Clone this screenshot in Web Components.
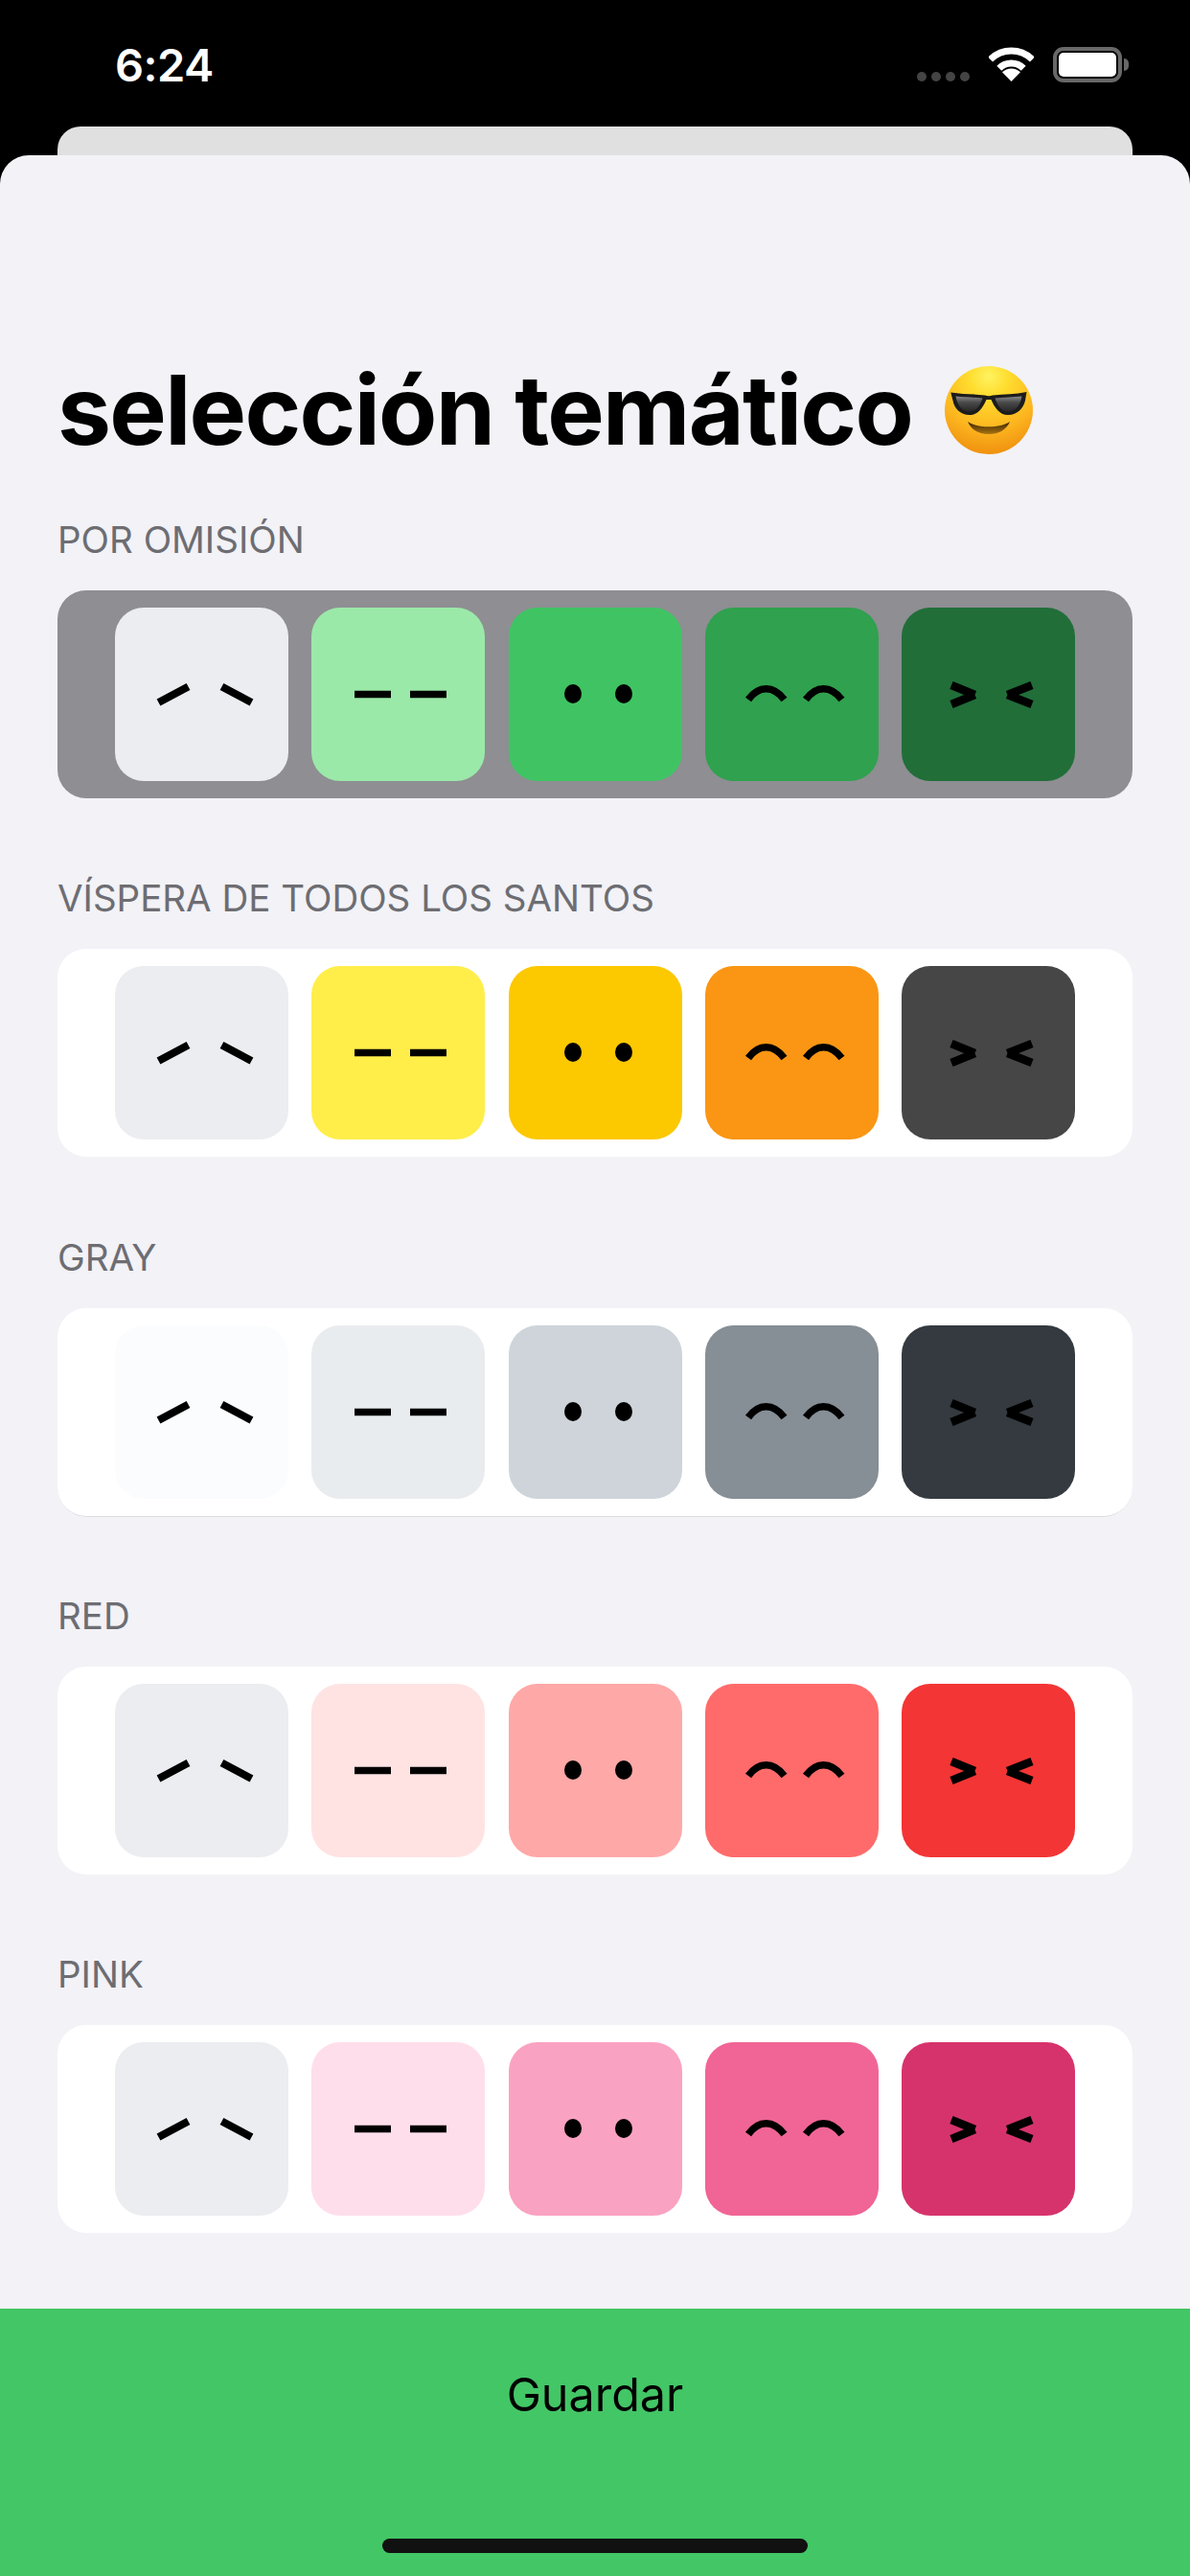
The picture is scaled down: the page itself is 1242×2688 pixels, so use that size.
<!DOCTYPE html>
<html lang="es">
<head>
<meta charset="utf-8">
<title>selección temático</title>
<style>
    html, body { margin: 0; padding: 0; background: #000; }
    body { width: 1242px; height: 2688px; overflow: hidden; font-family: Inter, "Liberation Sans", sans-serif; }
</style>
</head>
<body>
<theme-app>
    <status-bar slot="status" time="6:24"></status-bar>
    <sheet-title slot="title">selección temático</sheet-title>
    <theme-row label="POR OMISIÓN" colors="#ebedf0,#9be9a8,#40c463,#30a14e,#216e39" selected></theme-row>
    <theme-row label="VÍSPERA DE TODOS LOS SANTOS" colors="#ebedf0,#ffee4a,#fcc800,#fa9614,#464646"></theme-row>
    <theme-row label="GRAY" colors="#fbfcfe,#e9ecef,#ced4da,#868e96,#343a40" underline></theme-row>
    <theme-row label="RED" colors="#ebedf0,#ffe3e3,#ffa8a8,#ff6b6b,#f33535"></theme-row>
    <theme-row label="PINK" colors="#ebedf0,#ffdeeb,#faa2c1,#f06595,#d6336c"></theme-row>
    <save-button slot="footer">Guardar</save-button>
</theme-app>

<script>
class StatusBar extends HTMLElement {

    constructor() {
        super()
        this.attachShadow({ mode: 'open' })
        this.#render()
    }

    #render() {
        this.shadowRoot.innerHTML = `
            <style>
                :host {
                    display: flex;
                    height: 132px;
                    box-sizing: border-box;
                    padding: 49px 64px 0 120px;
                    justify-content: space-between;
                    align-items: flex-start;
                    color: #fff;
                }

                .time {
                    font: 600 47px/37px Inter, "Liberation Sans", sans-serif;
                    letter-spacing: -0.5px;
                }

                .icons {
                    display: flex;
                    align-items: flex-start;
                    gap: 20px;
                }

                .signal {
                    display: flex;
                    gap: 5px;
                    margin-top: 26px;
                }

                .signal i {
                    width: 10px;
                    height: 10px;
                    border-radius: 50%;
                    background: #444;
                }

                .battery {
                    display: flex;
                    align-items: center;
                }

                .battery .case {
                    width: 72px;
                    height: 37px;
                    box-sizing: border-box;
                    border: 4px solid #686868;
                    border-radius: 11px;
                    padding: 2px;
                }

                .battery .level {
                    height: 100%;
                    background: #fff;
                    border-radius: 5px;
                }

                .battery .nub {
                    width: 5px;
                    height: 13px;
                    margin-left: 2px;
                    background: #686868;
                    border-radius: 0 6px 6px 0;
                }
            </style>
            <span class="time">${this.getAttribute('time')}</span>
            <div class="icons">
                <div class="signal"><i></i><i></i><i></i><i></i></div>
                <svg width="47" height="37" viewBox="0 0 47 37">
                    <g fill="none" stroke="#fff" stroke-width="7">
                        <path d="M1.6 13.1 A31 31 0 0 1 45.4 13.1"/>
                        <path d="M10.8 22.3 A18 18 0 0 1 36.2 22.3"/>
                    </g>
                    <path d="M23.5 36 L14 26.3 A13.5 13.5 0 0 1 33 26.3 Z" fill="#fff"/>
                </svg>
                <div class="battery">
                    <div class="case"><div class="level"></div></div>
                    <div class="nub"></div>
                </div>
            </div>
        `
    }

}

class SheetTitle extends HTMLElement {

    constructor() {
        super()
        this.attachShadow({ mode: 'open' })
        this.shadowRoot.innerHTML = `
            <style>
                :host {
                    display: flex;
                    align-items: center;
                    gap: 34px;
                    height: 122px;
                    color: #000;
                }

                h1 {
                    margin: 0;
                    font: 700 100px/122px Inter, "Liberation Sans", sans-serif;
                    letter-spacing: -1.7px;
                    white-space: nowrap;
                }

                svg {
                    flex: none;
                }
            </style>
            <h1><slot></slot></h1>
            <svg width="92" height="92" viewBox="0 0 92 92" role="img" aria-label="😎">
                <defs>
                    <radialGradient id="skin" cx="50%" cy="12%" r="92%">
                        <stop offset="0" stop-color="#fff35f"/>
                        <stop offset="0.25" stop-color="#ffdc2e"/>
                        <stop offset="0.65" stop-color="#fcb51f"/>
                        <stop offset="1" stop-color="#ee8c0c"/>
                    </radialGradient>
                    <linearGradient id="lens" x1="0" y1="0" x2="0" y2="1">
                        <stop offset="0" stop-color="#8a8a8a"/>
                        <stop offset="0.4" stop-color="#4a4a4a"/>
                        <stop offset="1" stop-color="#262626"/>
                    </linearGradient>
                    <linearGradient id="mouth" x1="0" y1="0" x2="0" y2="1">
                        <stop offset="0" stop-color="#3a2204"/>
                        <stop offset="1" stop-color="#a9740f"/>
                    </linearGradient>
                </defs>
                <circle cx="46" cy="46" r="46" fill="url(#skin)"/>
                <path d="M6.3 27.5 C18 29.5 30 29 42 30.5 C44.5 31.5 47.5 31.5 50 30.5 C62 29 74 29.5 85.5 27 L84 36 C82 44 76 51 66 51 C57 51 52 43 48.5 35 L43.5 35 C40 43 35 51 26 51 C16 51 10 44 8.5 36 Z" fill="#1c1c1c"/>
                <path d="M11.5 31.5 C20 32.5 30 32.5 39.5 33.5 C37 41 33 47.5 26 47.5 C18 47.5 13 41 11.5 31.5 Z" fill="url(#lens)"/>
                <path d="M80.5 31.5 C72 32.5 62 32.5 52.5 33.5 C55 41 59 47.5 66 47.5 C74 47.5 79 41 80.5 31.5 Z" fill="url(#lens)"/>
                <path d="M24 58 C34 65 58 65 68 58 C64 67 56 71 46 71 C36 71 28 67 24 58 Z" fill="url(#mouth)"/>
            </svg>
        `
    }

}

// one face per tile position, coordinates are inside a 181 tile
const FACES = [
    `<path d="M45.5 99 L76.5 82.5 M111.5 82.5 L142.5 99" fill="none" stroke="#000" stroke-width="8"/>`,
    `<path d="M45 90.5 H83 M103 90.5 H141" fill="none" stroke="#000" stroke-width="7.5"/>`,
    `<ellipse cx="67" cy="90" rx="9" ry="10"/><ellipse cx="120" cy="90" rx="9" ry="10"/>`,
    `<path d="M45 96 C56 81 71 81 82.5 96 M105 96 C116 81 131 81 142.5 96" fill="none" stroke="#000" stroke-width="7.5"/>`,
    `<path d="M52 81 L76.5 91 M76.5 91 L52 101 M136 81 L110.5 91 M110.5 91 L136 101" fill="none" stroke="#000" stroke-width="8.5"/>`
]

class FaceTile extends HTMLElement {

    constructor() {
        super()
        this.attachShadow({ mode: 'open' })
        this.shadowRoot.innerHTML = `
            <style>
                :host {
                    display: block;
                    width: 181px;
                    height: 181px;
                    border-radius: 30px;
                    background: ${this.getAttribute('color')};
                }

                svg {
                    display: block;
                }
            </style>
            <svg width="181" height="181" viewBox="0 0 181 181">${FACES[this.getAttribute('face')]}</svg>
        `
    }

}

class ThemeRow extends HTMLElement {

    constructor() {
        super()
        this.attachShadow({ mode: 'open' })
        this.#render()
    }

    #render() {
        const tiles = this.getAttribute('colors').split(',')
            .map((color, i) => `<face-tile color="${color}" face="${i}"></face-tile>`)
            .join('')

        this.shadowRoot.innerHTML = `
            <style>
                :host {
                    display: block;
                }

                .label {
                    font: 400 38.5px/48px Inter, "Liberation Sans", sans-serif;
                    color: #6d6d72;
                    margin-bottom: 29px;
                    white-space: nowrap;
                }

                .tiles {
                    display: flex;
                    justify-content: space-between;
                    box-sizing: border-box;
                    height: 217px;
                    padding: 18px 60px;
                    border-radius: 30px;
                    background: #fff;
                }

                :host([selected]) .tiles {
                    background: #8e8e93;
                }

                :host([underline]) .tiles {
                    box-shadow: 0 1px 0 -0.5px #c8c7cc;
                }
            </style>
            <div class="label">${this.getAttribute('label')}</div>
            <div class="tiles">${tiles}</div>
        `
    }

}

class SaveButton extends HTMLElement {

    constructor() {
        super()
        this.attachShadow({ mode: 'open' })
        this.shadowRoot.innerHTML = `
            <style>
                :host {
                    display: flex;
                    flex-direction: column;
                    align-items: center;
                    box-sizing: border-box;
                    height: 279px;
                    padding: 59px 0 24px;
                    background: #43c666;
                }

                .text {
                    font: 400 48.5px/62px Inter, "Liberation Sans", sans-serif;
                    color: #000;
                }

                .home {
                    width: 444px;
                    height: 15px;
                    margin-top: auto;
                    border-radius: 8px;
                    background: #111;
                }
            </style>
            <div class="text"><slot></slot></div>
            <div class="home"></div>
        `
    }

}

class ThemeApp extends HTMLElement {

    constructor() {
        super()
        this.attachShadow({ mode: 'open' })
        this.shadowRoot.innerHTML = `
            <style>
                :host {
                    display: flex;
                    flex-direction: column;
                    height: 2688px;
                    background: #000;
                }

                .behind {
                    height: 30px;
                    margin: 0 60px;
                    background: #e0e0e0;
                    border-radius: 24px 24px 0 0;
                }

                .sheet {
                    flex: 1;
                    display: flex;
                    flex-direction: column;
                    background: #f2f2f7;
                    border-radius: 30px 30px 0 0;
                    overflow: hidden;
                }

                .content {
                    flex: 1;
                    padding: 205px 60px 0;
                }

                .rows {
                    display: flex;
                    flex-direction: column;
                    gap: 80.25px;
                    margin-top: 50px;
                }
            </style>
            <slot name="status"></slot>
            <div class="behind"></div>
            <div class="sheet">
                <div class="content">
                    <slot name="title"></slot>
                    <div class="rows"><slot></slot></div>
                </div>
                <slot name="footer"></slot>
            </div>
        `
    }

}

window.customElements.define('status-bar', StatusBar)
window.customElements.define('sheet-title', SheetTitle)
window.customElements.define('face-tile', FaceTile)
window.customElements.define('theme-row', ThemeRow)
window.customElements.define('save-button', SaveButton)
window.customElements.define('theme-app', ThemeApp)
</script>
</body>
</html>
